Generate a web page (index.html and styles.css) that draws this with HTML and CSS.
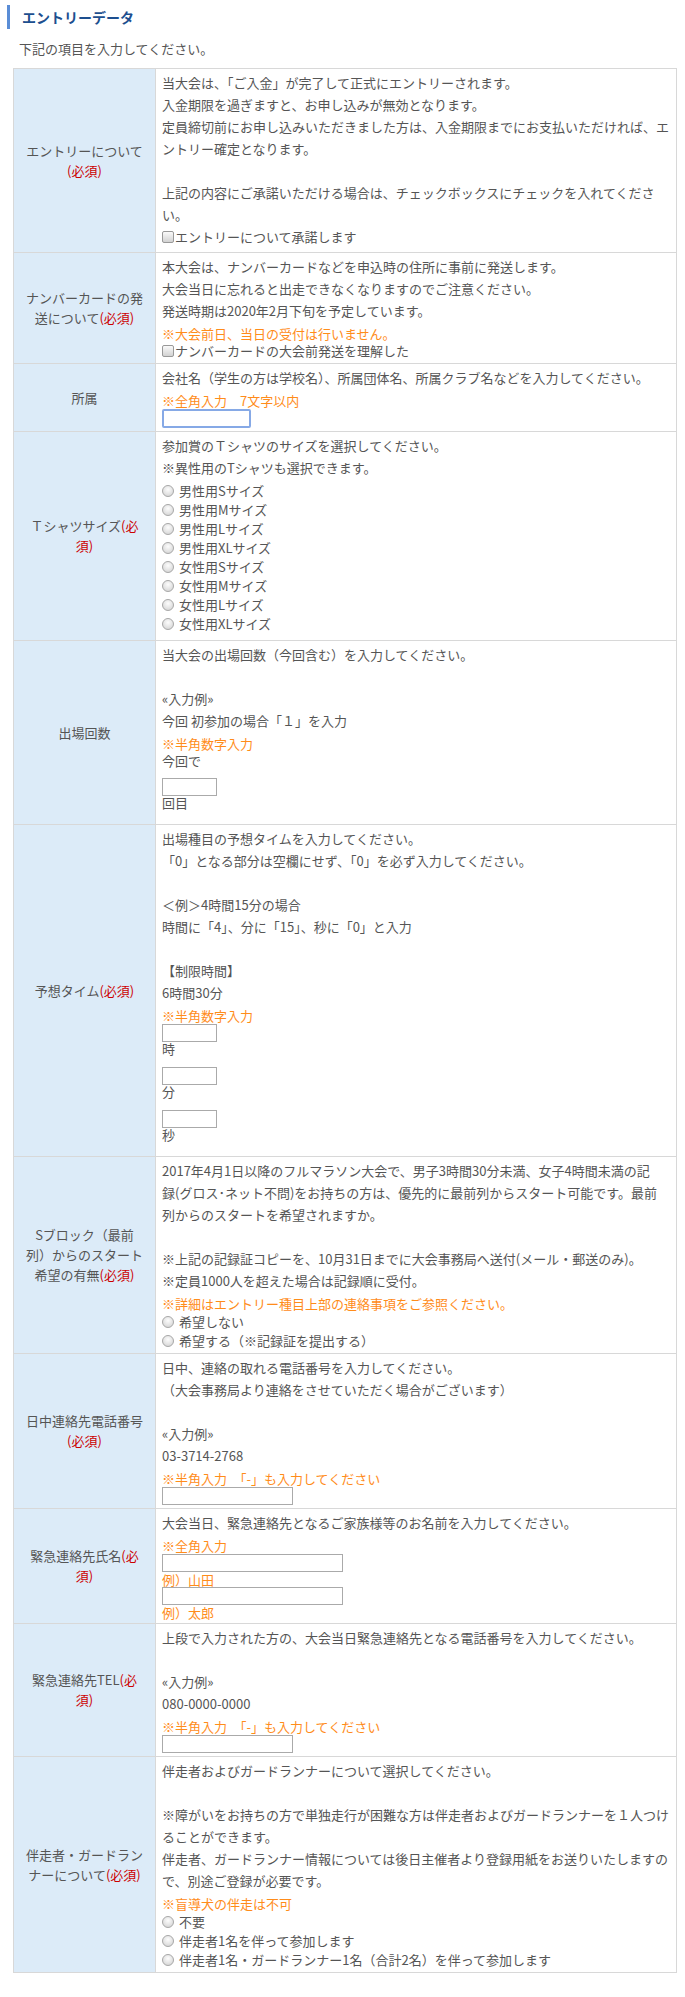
FILE: index.html
```html
<!DOCTYPE html>
<html lang="ja">
<head>
    <meta charset="UTF-8">
    <meta name="viewport" content="width=device-width, initial-scale=1.0">
    <title>エントリーデータ</title>
    <link rel="stylesheet" href="styles.css">
</head>
<body>

    <h2 class="entry-title">エントリーデータ</h2>
    <p class="lead">下記の項目を入力してください。</p>

    <table class="entry-table">
        <!-- エントリーについて -->
        <tr>
            <th>エントリーについて<span class="req">(必須)</span></th>
            <td>
                <p>当大会は、「ご入金」が完了して正式にエントリーされます。<br>
                入金期限を過ぎますと、お申し込みが無効となります。<br>
                定員締切前にお申し込みいただきました方は、入金期限までにお支払いただければ、エントリー確定となります。<br>
                <br>
                上記の内容にご承諾いただける場合は、チェックボックスにチェックを入れてください。</p>
                <label class="check check-wide"><input type="checkbox">エントリーについて承諾します</label>
            </td>
        </tr>

        <!-- ナンバーカード -->
        <tr>
            <th>ナンバーカードの発送について<span class="req">(必須)</span></th>
            <td>
                <p>本大会は、ナンバーカードなどを申込時の住所に事前に発送します。<br>
                大会当日に忘れると出走できなくなりますのでご注意ください。<br>
                発送時期は2020年2月下旬を予定しています。</p>
                <span class="note">※大会前日、当日の受付は行いません。</span>
                <label class="check"><input type="checkbox">ナンバーカードの大会前発送を理解した</label>
            </td>
        </tr>

        <!-- 所属 -->
        <tr>
            <th>所属</th>
            <td>
                <p>会社名（学生の方は学校名）、所属団体名、所属クラブ名などを入力してください。</p>
                <span class="note">※全角入力　7文字以内</span>
                <input type="text" class="text text-short is-focus">
            </td>
        </tr>

        <!-- Tシャツ -->
        <tr>
            <th>Ｔシャツサイズ<span class="req">(必須)</span></th>
            <td>
                <p>参加賞のＴシャツのサイズを選択してください。<br>
                ※異性用のTシャツも選択できます。</p>
                <div class="options options-wide">
                    <label class="opt"><input type="radio" name="shirt">男性用Sサイズ</label>
                    <label class="opt"><input type="radio" name="shirt">男性用Mサイズ</label>
                    <label class="opt"><input type="radio" name="shirt">男性用Lサイズ</label>
                    <label class="opt"><input type="radio" name="shirt">男性用XLサイズ</label>
                    <label class="opt"><input type="radio" name="shirt">女性用Sサイズ</label>
                    <label class="opt"><input type="radio" name="shirt">女性用Mサイズ</label>
                    <label class="opt"><input type="radio" name="shirt">女性用Lサイズ</label>
                    <label class="opt"><input type="radio" name="shirt">女性用XLサイズ</label>
                </div>
            </td>
        </tr>

        <!-- 出場回数 -->
        <tr>
            <th>出場回数</th>
            <td>
                <p>当大会の出場回数（今回含む）を入力してください。<br>
                <br>
                «入力例»<br>
                今回 初参加の場合「１」を入力</p>
                <span class="note">※半角数字入力</span>
                <p class="pre">今回で</p>
                <div class="unit">
                    <input type="text" class="text text-num">
                    <span>回目</span>
                </div>
            </td>
        </tr>

        <!-- 予想タイム -->
        <tr>
            <th>予想タイム<span class="req">(必須)</span></th>
            <td>
                <p>出場種目の予想タイムを入力してください。<br>
                「0」となる部分は空欄にせず、「0」を必ず入力してください。<br>
                <br>
                ＜例＞4時間15分の場合<br>
                時間に「4」、分に「15」、秒に「0」と入力<br>
                <br>
                【制限時間】<br>
                6時間30分</p>
                <span class="note">※半角数字入力</span>
                <div class="unit">
                    <input type="text" class="text text-num">
                    <span>時</span>
                </div>
                <div class="unit">
                    <input type="text" class="text text-num">
                    <span>分</span>
                </div>
                <div class="unit">
                    <input type="text" class="text text-num">
                    <span>秒</span>
                </div>
            </td>
        </tr>

        <!-- Sブロック -->
        <tr>
            <th>Sブロック（最前<br>列）からのスタート<br>希望の有無<span class="req">(必須)</span></th>
            <td>
                <p>2017年4月1日以降のフルマラソン大会で、男子3時間30分未満、女子4時間未満の記<br>録(グロス･ネット不問)をお持ちの方は、優先的に最前列からスタート可能です。最前<br>列からのスタートを希望されますか。<br>
                <br>
                ※上記の記録証コピーを、10月31日までに大会事務局へ送付(メール・郵送のみ)。<br>
                ※定員1000人を超えた場合は記録順に受付。</p>
                <span class="note">※詳細はエントリー種目上部の連絡事項をご参照ください。</span>
                <div class="options">
                    <label class="opt"><input type="radio" name="sblock">希望しない</label>
                    <label class="opt"><input type="radio" name="sblock">希望する（※記録証を提出する）</label>
                </div>
            </td>
        </tr>

        <!-- 日中連絡先 -->
        <tr>
            <th>日中連絡先電話番号<span class="req">(必須)</span></th>
            <td>
                <p>日中、連絡の取れる電話番号を入力してください。<br>
                （大会事務局より連絡をさせていただく場合がございます）<br>
                <br>
                «入力例»<br>
                03-3714-2768</p>
                <span class="note">※半角入力　「-」も入力してください</span>
                <input type="text" class="text text-tel">
            </td>
        </tr>

        <!-- 緊急連絡先氏名 -->
        <tr>
            <th>緊急連絡先氏名<span class="req">(必須)</span></th>
            <td>
                <p>大会当日、緊急連絡先となるご家族様等のお名前を入力してください。</p>
                <span class="note">※全角入力</span>
                <input type="text" class="text text-name">
                <span class="ex">例）山田</span>
                <input type="text" class="text text-name">
                <span class="ex">例）太郎</span>
            </td>
        </tr>

        <!-- 緊急連絡先TEL -->
        <tr>
            <th>緊急連絡先TEL<span class="req">(必須)</span></th>
            <td>
                <p>上段で入力された方の、大会当日緊急連絡先となる電話番号を入力してください。<br>
                <br>
                «入力例»<br>
                080-0000-0000</p>
                <span class="note">※半角入力　「-」も入力してください</span>
                <input type="text" class="text text-tel">
            </td>
        </tr>

        <!-- 伴走者 -->
        <tr>
            <th>伴走者・ガードランナーについて<span class="req">(必須)</span></th>
            <td>
                <p>伴走者およびガードランナーについて選択してください。<br>
                <br>
                ※障がいをお持ちの方で単独走行が困難な方は伴走者およびガードランナーを１人つけることができます。<br>
                伴走者、ガードランナー情報については後日主催者より登録用紙をお送りいたしますので、別途ご登録が必要です。</p>
                <span class="note">※盲導犬の伴走は不可</span>
                <div class="options">
                    <label class="opt"><input type="radio" name="guide">不要</label>
                    <label class="opt"><input type="radio" name="guide">伴走者1名を伴って参加します</label>
                    <label class="opt"><input type="radio" name="guide">伴走者1名・ガードランナー1名（合計2名）を伴って参加します</label>
                </div>
            </td>
        </tr>
    </table>

</body>
</html>
```

FILE: styles.css
```css
body {
    font-family: "Noto Sans CJK JP", "Noto Sans", sans-serif;
    font-size: 13px;
    color: #555;
    background-color: #fff;
    margin: 0;
    padding: 0;
}
p {
    margin: 0;
    line-height: 22px;
}
.entry-title {
    margin: 5px 0 0 7px;
    padding-left: 12px;
    border-left: 3px solid #5a8dd6;
    font-size: 14px;
    font-weight: bold;
    line-height: 24px;
    color: #1d4f8f;
}
.lead {
    margin: 9px 0 8px 19px;
}
.entry-table {
    width: 664px;
    margin-left: 13px;
    border-collapse: collapse;
}
.entry-table th,
.entry-table td {
    border: 1px solid #d8d8d8;
}
.entry-table th {
    width: 119px;
    padding: 0 11px;
    background-color: #dcebf8;
    font-weight: normal;
    line-height: 20px;
    text-align: center;
    vertical-align: middle;
}
.entry-table td {
    padding: 3px 5px 3px 6px;
    vertical-align: top;
}
.req {
    color: #cc0000;
}
.note {
    display: block;
    padding-top: 4px;
    line-height: 16px;
    color: #ff8c1a;
}
.ex {
    display: block;
    line-height: 15px;
    color: #ff8c1a;
}
.check {
    display: block;
    line-height: 18px;
}
.check-wide {
    line-height: 22px;
    padding-bottom: 1px;
}
.check input {
    -webkit-appearance: none;
    appearance: none;
    box-sizing: border-box;
    width: 12px;
    height: 12px;
    margin: 0 1px 0 0;
    border: 1px solid #999;
    border-radius: 2px;
    background: linear-gradient(#fafafa, #d2d2d2);
    vertical-align: -1px;
}
.options-wide {
    margin: 2px 0 4px;
}
.opt {
    display: block;
    line-height: 19px;
}
.opt input {
    -webkit-appearance: none;
    appearance: none;
    box-sizing: border-box;
    width: 12px;
    height: 12px;
    margin: 0 5px 0 0;
    border: 1px solid #a8a8a8;
    border-radius: 50%;
    background: radial-gradient(circle at 50% 35%, #fdfdfd, #cfcfcf);
    vertical-align: -1px;
}
.text {
    display: block;
    box-sizing: border-box;
    height: 18px;
    margin: 0;
    padding: 0 2px;
    border: 1px solid #aaa;
    background-color: #fff;
    font-size: 13px;
}
.text-short {
    width: 89px;
}
.text-num {
    width: 55px;
}
.text-tel {
    width: 131px;
}
.text-name {
    width: 181px;
}
.is-focus {
    height: 19px;
    border: 2px solid #86a9e6;
    border-radius: 2px;
}
.pre {
    line-height: 18px;
    margin-bottom: 8px;
}
.unit {
    margin-bottom: 11px;
}
.unit span {
    display: block;
    line-height: 14px;
}
```
